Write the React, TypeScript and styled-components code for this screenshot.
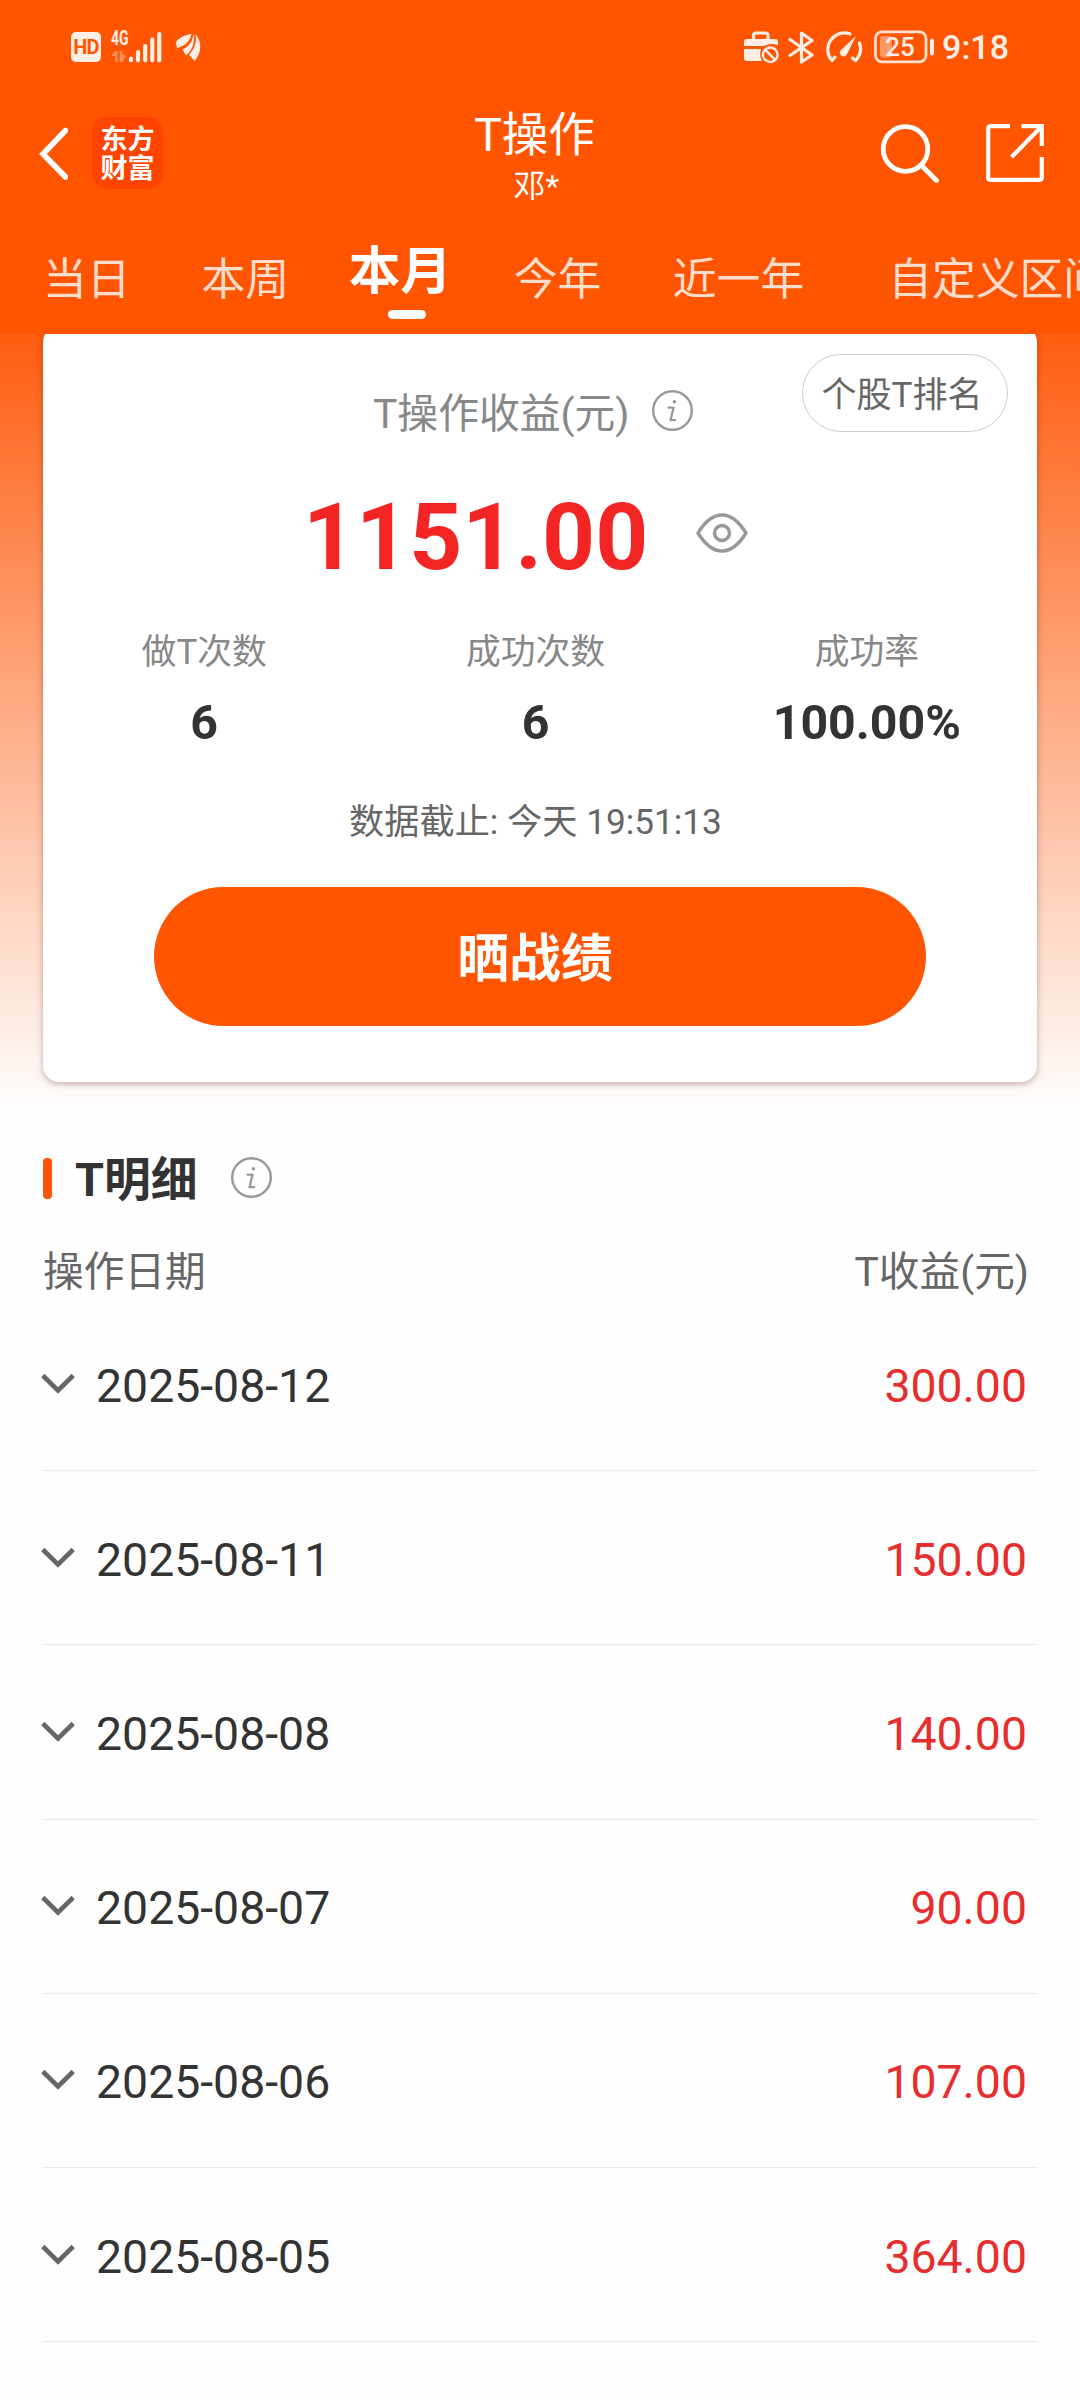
import React from "react";
import styled, { createGlobalStyle } from "styled-components";

const ORANGE = "#ff5500";
const FONT = `Roboto, "Noto Sans CJK SC", sans-serif`;

const GlobalStyle = createGlobalStyle`
  * { box-sizing: border-box; }
  body { margin: 0; background: #fefefe; font-family: ${FONT}; }
`;

const Screen = styled.div`
  width: 1080px;
  height: 2400px;
  overflow: hidden;
  display: flex;
  flex-direction: column;
  background: #fefefe;
`;

const Header = styled.header`
  height: 334px;
  flex: none;
  background: ${ORANGE};
  color: #fff;
  display: flex;
  flex-direction: column;
`;

const StatusBar = styled.div`
  height: 94px;
  padding: 0 71px 0 71px;
  display: flex;
  align-items: center;
  justify-content: space-between;
  color: #ffeee5;
`;

const StatusGroup = styled.div`
  display: flex;
  align-items: center;
`;

const HdBadge = styled.div`
  width: 30px;
  height: 30px;
  border-radius: 5px;
  background: #ffeee5;
  color: ${ORANGE};
  font-size: 20px;
  font-weight: 700;
  line-height: 31px;
  text-align: center;
  letter-spacing: -0.8px;
`;

const Network = styled.div`
  display: flex;
  margin-left: 10px;
  height: 32px;
`;

const NetworkType = styled.div`
  width: 17px;
  display: flex;
  flex-direction: column;
  justify-content: space-between;
  font: 700 20px/15px Roboto, sans-serif;
`;

const NetworkLabel = styled.span`
  transform: scaleX(0.7);
  transform-origin: left;
`;

const Clock = styled.span`
  font-size: 34px;
  font-weight: 500;
  line-height: 40px;
  margin-left: 6px;
`;

const Glyph = styled.svg<{ $ml?: number; $mb?: number }>`
  display: block;
  flex: none;
  margin-left: ${(p) => p.$ml ?? 0}px;
  margin-bottom: ${(p) => p.$mb ?? 0}px;
`;

const NavBar = styled.div`
  height: 126px;
  padding: 0 36px 0 39px;
  display: grid;
  grid-template-columns: 1fr auto 1fr;
  align-items: start;
`;

const NavLeft = styled.div`
  display: flex;
  align-items: center;
  padding-top: 23px;
`;

const Logo = styled.div`
  width: 71px;
  height: 72px;
  margin-left: 24px;
  border-radius: 15px;
  background: #ff4400;
  display: flex;
  flex-direction: column;
  align-items: center;
  justify-content: center;
  font-family: "Noto Sans CJK SC", sans-serif;
  font-size: 27px;
  line-height: 29px;
  font-weight: 700;
  padding-bottom: 2px;
`;

const NavTitle = styled.div`
  display: flex;
  flex-direction: column;
  align-items: center;
  padding: 16px 14px 0 0;
`;

const Title = styled.h1`
  margin: 0;
  font-size: 46.5px;
  line-height: 50px;
  font-weight: 400;
`;

const SubTitle = styled.span`
  font-size: 32px;
  line-height: 40px;
  margin-top: 6px;
  padding-left: 4px;
`;

const NavRight = styled.div`
  display: flex;
  justify-content: flex-end;
  padding-top: 30px;
`;

const Tabs = styled.nav`
  height: 114px;
  padding: 0 0 0 43px;
  display: flex;
  align-items: flex-start;
  white-space: nowrap;
`;

const Tab = styled.div<{ $active?: boolean; $gap: number }>`
  flex: none;
  margin-left: ${(p) => p.$gap}px;
  padding-top: ${(p) => (p.$active ? 22 : 32)}px;
  display: flex;
  flex-direction: column;
  align-items: center;
  font-size: ${(p) => (p.$active ? 51.5 : 43.8)}px;
  line-height: ${(p) => (p.$active ? 60 : 56)}px;
  font-weight: ${(p) => (p.$active ? 700 : 400)};
  color: ${(p) => (p.$active ? "#fff" : "#ffddcc")};
`;

const TabMark = styled.i`
  width: 38px;
  height: 9px;
  border-radius: 5px;
  background: #fff;
  margin: 8px 0 0 13px;
`;

const Hero = styled.section`
  height: 776px;
  flex: none;
  padding: 0 43px;
  background: linear-gradient(#ff5d10 0%, #fefefe 100%);
  overflow: hidden;
`;

const Card = styled.div`
  height: 756px;
  margin-top: -8px;
  border-radius: 16px;
  background: #fff;
  box-shadow: 0 2px 6px rgba(60, 20, 0, 0.32);
  display: flex;
  flex-direction: column;
  align-items: center;
  padding: 0 9px 0 0;
`;

const CardTop = styled.div`
  width: 100%;
  height: 105px;
  padding-top: 28px;
  display: grid;
  grid-template-columns: 330px 1fr auto;
  margin-bottom: 52px;
`;

const CardLabel = styled.div`
  grid-column: 2;
  display: flex;
  align-items: center;
  height: 60px;
  margin-top: 26px;
  font-size: 40.8px;
  color: #888;
`;

const RankButton = styled.button`
  width: 206px;
  height: 78px;
  margin-right: 20px;
  padding: 5px 6px 0 0;
  border: 1px solid #ccc;
  border-radius: 39px;
  background: #fff;
  color: #666;
  font: 400 35px/44px ${FONT};
`;

const TotalRow = styled.div`
  width: 100%;
  height: 110px;
  padding-left: 260px;
  display: flex;
  align-items: center;
`;

const Total = styled.strong`
  font-size: 92.5px;
  line-height: 110px;
  font-weight: 700;
  color: #f32424;
`;

const Stats = styled.div`
  width: 994px;
  display: grid;
  grid-template-columns: repeat(3, 1fr);
  margin: 34px 0 0;
`;

const Stat = styled.div`
  display: flex;
  flex-direction: column;
  align-items: center;
`;

const StatName = styled.span`
  font-size: 34.8px;
  line-height: 50px;
  color: #888;
`;

const StatValue = styled.b`
  font-size: 48.3px;
  line-height: 56px;
  margin-top: 18px;
  color: #333;
`;

const AsOf = styled.p`
  margin: 46px 0 0;
  font-size: 35.2px;
  line-height: 50px;
  color: #666;
`;

const ShareButton = styled.button`
  width: 772px;
  height: 139px;
  flex: none;
  margin: 40px 0 0 9px;
  padding: 6px 10px 0 0;
  border: 0;
  border-radius: 70px;
  background: ${ORANGE};
  color: #fff;
  font: 700 51.8px/60px ${FONT};
`;

const Detail = styled.section`
  flex: none;
  padding: 0 43px;
`;

const SectionHead = styled.div`
  display: flex;
  align-items: center;
  height: 60px;
  margin-top: 38px;
`;

const Accent = styled.i`
  width: 9px;
  height: 41px;
  border-radius: 4px;
  background: ${ORANGE};
`;

const SectionTitle = styled.h2`
  margin: 4px 0 0 23px;
  font-size: 46.8px;
  line-height: 60px;
  font-weight: 700;
  color: #333;
`;

const ColumnHead = styled.div`
  display: flex;
  justify-content: space-between;
  padding-right: 8px;
  margin: 40px 0 1px;
  font-size: 40.7px;
  line-height: 48px;
  color: #666;
`;

const Row = styled.div`
  height: 174.2px;
  padding: 4px 10px 0 0;
  border-bottom: 1px solid #ebebeb;
  display: flex;
  align-items: center;
  font-size: 46.4px;
`;

const RowDate = styled.span`
  margin-left: 21px;
  flex: 1;
  color: #333;
`;

const RowAmount = styled.span`
  color: #e62e2e;
`;

const InfoIcon = ({ ml, mb }: { ml: number; mb?: number }) => (
  <Glyph $ml={ml} $mb={mb} width="41" height="41" viewBox="0 0 41 41" fill="none" stroke="#999" strokeLinecap="round" strokeLinejoin="round">
    <circle cx="20.5" cy="20.5" r="19.3" strokeWidth="2.4" />
    <circle cx="22.4" cy="11.8" r="1.8" fill="#999" stroke="none" />
    <path d="M16.5 17.600h5l-3 12.600h4.600" strokeWidth="2.300" />
  </Glyph>
);

const tabs = [
  { label: "当日", gap: 0 },
  { label: "本周", gap: 71 },
  { label: "本月", gap: 59.5, active: true },
  { label: "今年", gap: 62 },
  { label: "近一年", gap: 71.5 },
  { label: "自定义区间", gap: 84 },
];

const stats = [
  ["做T次数", "6"],
  ["成功次数", "6"],
  ["成功率", "100.00%"],
];

const rows = [
  ["2025-08-12", "300.00"],
  ["2025-08-11", "150.00"],
  ["2025-08-08", "140.00"],
  ["2025-08-07", "90.00"],
  ["2025-08-06", "107.00"],
  ["2025-08-05", "364.00"],
];

export default function App() {
  return (
    <Screen>
      <GlobalStyle />
      <Header>
        <StatusBar>
          <StatusGroup>
            <HdBadge>HD</HdBadge>
            <Network>
              <NetworkType>
                <NetworkLabel>4G</NetworkLabel>
                <Glyph width="15" height="12" viewBox="0 0 15 12" fill="#ff8d57">
                  <path d="M4 0h2.600v11H4V5H0zM8.600 0h2.600v3l4 2-4 6H8.600z" />
                </Glyph>
              </NetworkType>
              <Glyph width="35" height="32" viewBox="0 0 35 32" stroke="#ffeee5" strokeWidth="4.200" strokeLinecap="round">
                <path d="M3 27.500v1.800M10 21v8.300M17.200 15v14.300M24.300 8.500v20.800M31.300 3v26.300" />
              </Glyph>
            </Network>
            <Glyph $ml={13} width="25" height="29" viewBox="0 0 25 29" fill="#ffeee5">
              <path d="M15.500 1C10 1.500 1.500 5 0 9.500L1 15C8 13.500 14 9 15.500 1z" />
              <path d="M17.300 0.500C17 9 12 14 6.500 16.500L10 22.500C16 18 19.500 9 17.300 0.500z" />
              <path d="M19.300 1C21.500 9 17.500 17 13 21.500L18.500 28C25.500 21 26.500 8 19.300 1z" />
            </Glyph>
          </StatusGroup>
          <StatusGroup>
            <Glyph width="36" height="33" viewBox="0 0 36 33" fill="none">
              <path d="M9.500 9V4.500Q9.500 2 12 2h9.500Q24 2 24 4.500V9" stroke="#ffeee5" strokeWidth="3.200" />
              <path d="M3 8h28q3 0 3 3v3.500q-7-3-14 .5H0v-4q0-3 3-3zM0 18h17q-2 7 1 12H3q-3 0-3-3z" fill="#ffeee5" />
              <circle cx="26.300" cy="23.800" r="9.500" fill={ORANGE} />
              <circle cx="26.300" cy="23.800" r="7.300" stroke="#ffeee5" strokeWidth="2.400" />
              <path d="M21.300 18.800l10 10" stroke="#ffeee5" strokeWidth="2.400" />
            </Glyph>
            <Glyph $ml={8} width="28" height="33" viewBox="0 0 28 33" fill="none" stroke="#ffeee5" strokeWidth="3.200" strokeLinejoin="round" strokeLinecap="round">
              <path d="M2 8.500L24 24l-10.500 7V2L24 9.500 2 24.500" />
            </Glyph>
            <Glyph $ml={9} width="38" height="33" viewBox="0 0 38 33" fill="none" stroke="#ffeee5" strokeLinecap="round">
              <path d="M25 3A16.500 16.500 0 0 0 7 29.500l3-3.500M34.500 12A17 17 0 0 1 30.500 29.500l-3-2.500" strokeWidth="3.200" strokeLinejoin="round" />
              <path d="M31 5L21.800 23.500a3.600 3.600 0 0 1-6.300-4z" fill="#ffeee5" stroke="none" />
            </Glyph>
            <Glyph $ml={11} width="62" height="34" viewBox="0 0 62 34" fill="none">
              <rect x="1.500" y="1.800" width="50.500" height="30" rx="6.500" stroke="#ffe0d0" strokeWidth="2.800" />
              <rect x="6" y="6" width="12" height="21.500" rx="3" fill="#ff9966" />
              <rect x="56" y="8.500" width="4" height="17" rx="2" fill="#ffeee5" />
              <text x="26" y="25.500" textAnchor="middle" fill="#ffeee5" fontFamily="Roboto" fontWeight="500" fontSize="26">25</text>
            </Glyph>
            <Clock>9:18</Clock>
          </StatusGroup>
        </StatusBar>
        <NavBar>
          <NavLeft>
            <Glyph width="29" height="54" viewBox="0 0 29 54" fill="none" stroke="#fff" strokeWidth="5.600" strokeLinecap="round">
              <path d="M26.500 4.500L4 28 26.500 51" />
            </Glyph>
            <Logo>
              <span>东方</span>
              <span>财富</span>
            </Logo>
          </NavLeft>
          <NavTitle>
            <Title>T操作</Title>
            <SubTitle>邓*</SubTitle>
          </NavTitle>
          <NavRight>
            <Glyph width="60" height="60" viewBox="0 0 60 60" fill="none" stroke="#fff" strokeLinecap="round">
              <circle cx="25.500" cy="25" r="22.300" strokeWidth="4.800" />
              <path d="M41.500 41.500L56.500 56.500" strokeWidth="4.800" />
            </Glyph>
            <Glyph $ml={46} width="58" height="58" viewBox="0 0 58 58" fill="none" stroke="#fff" strokeWidth="4.200">
              <path d="M24 2.200H4.500Q2.200 2.200 2.200 4.500V53.500Q2.200 55.800 4.500 55.800H53.500Q55.800 55.800 55.800 53.500V33M35.500 2.200H55.800V22M55 3L25.500 33" />
            </Glyph>
          </NavRight>
        </NavBar>
        <Tabs>
          {tabs.map((t) => (
            <Tab key={t.label} $active={t.active} $gap={t.gap}>
              {t.label}
              {t.active && <TabMark />}
            </Tab>
          ))}
        </Tabs>
      </Header>
      <Hero>
        <Card>
          <CardTop>
            <CardLabel>
              T操作收益(元)
              <InfoIcon ml={22} />
            </CardLabel>
            <RankButton>个股T排名</RankButton>
          </CardTop>
          <TotalRow>
            <Total>1151.00</Total>
            <Glyph $ml={48} $mb={10} width="52" height="40" viewBox="0 0 52 40" fill="none" stroke="#999" strokeWidth="3.400" strokeLinejoin="round">
              <path d="M2 20Q13 2 26 2T50 20Q39 38 26 38T2 20z" />
              <circle cx="26" cy="20" r="7.500" />
            </Glyph>
          </TotalRow>
          <Stats>
            {stats.map(([name, value]) => (
              <Stat key={name}>
                <StatName>{name}</StatName>
                <StatValue>{value}</StatValue>
              </Stat>
            ))}
          </Stats>
          <AsOf>数据截止: 今天 19:51:13</AsOf>
          <ShareButton>晒战绩</ShareButton>
        </Card>
      </Hero>
      <Detail>
        <SectionHead>
          <Accent />
          <SectionTitle>T明细</SectionTitle>
          <InfoIcon ml={33} mb={1} />
        </SectionHead>
        <ColumnHead>
          <span>操作日期</span>
          <span>T收益(元)</span>
        </ColumnHead>
        {rows.map(([date, amount]) => (
          <Row key={date}>
            <Glyph $ml={-2} $mb={4} width="34" height="22" viewBox="0 0 34 22" fill="none" stroke="#666" strokeWidth="4.600">
              <path d="M1.800 2.500L17 17.500 32.200 2.500" />
            </Glyph>
            <RowDate>{date}</RowDate>
            <RowAmount>{amount}</RowAmount>
          </Row>
        ))}
      </Detail>
    </Screen>
  );
}
